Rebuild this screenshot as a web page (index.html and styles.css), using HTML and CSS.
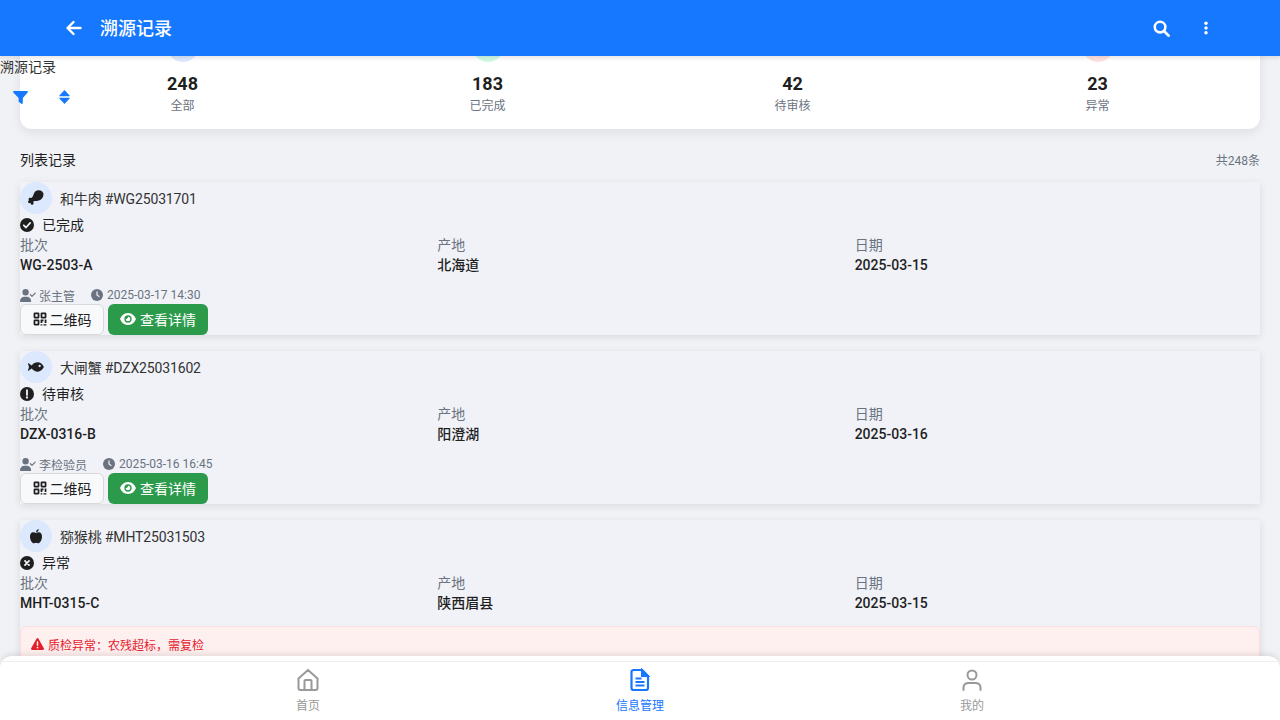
FILE: index.html
```html
<!DOCTYPE html>
<html lang="zh">
  <head>
    <meta charset="utf-8">
    <title>溯源记录</title>
    <link rel="stylesheet" href="styles.css">
  </head>
  <body>
    <svg class="sprite" aria-hidden="true">
      <symbol id="i-user-check" viewBox="0 0 640 512"><path d="M224 256a128 128 0 1 0 0-256 128 128 0 1 0 0 256zm-45.700 48C79.800 304 0 383.800 0 482.300 0 498.700 13.300 512 29.700 512h388.600c16.400 0 29.700-13.300 29.700-29.700C448 383.800 368.200 304 269.700 304h-91.400zM625 177L497 305c-9.400 9.400-24.600 9.400-33.900 0l-64-64c-9.400-9.400-9.400-24.600 0-33.900s24.600-9.400 33.900 0l47 47 111-111c9.400-9.400 24.600-9.400 33.900 0s9.400 24.600 0 33.900z"/></symbol>
      <symbol id="i-clock" viewBox="0 0 24 24"><circle cx="12" cy="12" r="12" fill="currentColor"/><path d="M12 5.500V12l4 3" fill="none" stroke="#f0f2f7" stroke-width="2.400" stroke-linecap="round"/></symbol>
      <symbol id="i-qr" viewBox="0 0 24 24"><path d="M3 1h6a2 2 0 0 1 2 2v6a2 2 0 0 1-2 2H3a2 2 0 0 1-2-2V3a2 2 0 0 1 2-2zm1 3v4h4V4zM15 1h6a2 2 0 0 1 2 2v6a2 2 0 0 1-2 2h-6a2 2 0 0 1-2-2V3a2 2 0 0 1 2-2zm1 3v4h4V4zM3 13h6a2 2 0 0 1 2 2v6a2 2 0 0 1-2 2H3a2 2 0 0 1-2-2v-6a2 2 0 0 1 2-2zm1 3v4h4v-4zM13 13h5v3h-2v3h-3zM20 13h3v6h-3zM13 21h3v2h-3zM18 21h5v2h-5z" fill-rule="evenodd"/></symbol>
      <symbol id="i-eye" viewBox="0 0 24 24"><path d="M12 3C6 3 1.800 7.500 0 12c1.800 4.500 6 9 12 9s10.200-4.500 12-9C22.200 7.500 18 3 12 3zm0 3.500a5.500 5.500 0 1 1 0 11 5.500 5.500 0 0 1 0-11z" fill-rule="evenodd"/><path d="M12 8.500a3.500 3.500 0 1 1-3.500 3.500c1.500 0 3.500-1.500 3.500-3.500z"/></symbol>
    </svg>

    <header class="topbar">
      <svg class="topbar-back" viewBox="0 0 16 16"><path d="M14.500 8H2M7.500 2L1.500 8l6 6" fill="none" stroke="#fff" stroke-width="2.400" stroke-linecap="round" stroke-linejoin="round"/></svg>
      <h1 class="topbar-title">溯源记录</h1>
      <svg class="topbar-search" viewBox="0 0 24 24"><circle cx="10" cy="10" r="7.500" fill="none" stroke="#fff" stroke-width="3.600"/><path d="M15.500 15.500L22 22" stroke="#fff" stroke-width="3.800" stroke-linecap="round"/></svg>
      <svg class="topbar-more" viewBox="0 0 6 18"><circle cx="3" cy="3" r="2.200" fill="#fff"/><circle cx="3" cy="9" r="2.200" fill="#fff"/><circle cx="3" cy="15" r="2.200" fill="#fff"/></svg>
    </header>

    <div class="float-tools">
      <div class="float-title">溯源记录</div>
      <div class="float-icons">
        <svg class="icon-filter" viewBox="0 0 16 14"><path d="M1 0h14c.9 0 1.300 1 .7 1.700L10.500 7.500V13c0 .8-.8 1.200-1.500.7L6 11.500V7.500L.3 1.700C-.3 1 .1 0 1 0z"/></svg>
        <svg class="icon-sort" viewBox="0 0 11 14"><path d="M5.500 0L10.600 5.500a.4.400 0 0 1-.3.700H.7a.4.400 0 0 1-.3-.7zM5.500 14L10.600 8.500a.4.400 0 0 0-.3-.7H.7a.4.400 0 0 0-.3.700z"/></svg>
      </div>
    </div>

    <main class="content">
      <section class="stats">
        <div class="stat">
          <span class="stat-dot dot-blue"></span>
          <strong class="stat-num">248</strong>
          <span class="stat-label">全部</span>
        </div>
        <div class="stat">
          <span class="stat-dot dot-green"></span>
          <strong class="stat-num">183</strong>
          <span class="stat-label">已完成</span>
        </div>
        <div class="stat">
          <span class="stat-dot"></span>
          <strong class="stat-num">42</strong>
          <span class="stat-label">待审核</span>
        </div>
        <div class="stat">
          <span class="stat-dot dot-red"></span>
          <strong class="stat-num">23</strong>
          <span class="stat-label">异常</span>
        </div>
      </section>

      <div class="list-head">
        <span class="list-title">列表记录</span>
        <span class="list-count">共248条</span>
      </div>

      <article class="record">
        <div class="record-head">
          <span class="avatar">
            <svg viewBox="0 0 24 24"><path d="M23.500 6.500C23 2.500 19 0 15 .5c-3.500.5-5.500 3-6.500 6-.6 1.800-1.200 3.500-2.500 4.800-.5.5-1 .8-1.500.7l-1-.4c-1.300-.5-2.700.5-2.700 1.800 0 .8.400 1.500 1 1.900C.9 15.500 0 16.500 0 17.700c0 1.600 1.700 2.700 3.200 2l1-.4c-.1.300-.2.700-.1 1 .1 1.400 1.600 2.300 2.900 1.800 1.300-.5 1.800-2 1.200-3.200l-.5-.8c.7-1.100 2-1.500 3.500-1.500 3.500 0 6.500-.5 9-3 1.900-1.900 3.200-4.500 2.800-7.100z"/></svg>
          </span>
          <span class="record-name">和牛肉 #WG25031701</span>
        </div>
        <div class="record-status">
          <svg viewBox="0 0 24 24"><circle cx="12" cy="12" r="12"/><path d="M6.500 12.500l3.800 3.800 7.200-7.800" fill="none" stroke="#f0f2f7" stroke-width="3" stroke-linecap="round" stroke-linejoin="round"/></svg>
          <span>已完成</span>
        </div>
        <div class="record-grid">
          <div><div class="field-label">批次</div><div class="field-value">WG-2503-A</div></div>
          <div><div class="field-label">产地</div><div class="field-value">北海道</div></div>
          <div><div class="field-label">日期</div><div class="field-value">2025-03-15</div></div>
        </div>
        <div class="record-meta">
          <svg class="meta-user"><use href="#i-user-check"/></svg>
          <span>张主管</span>
          <svg class="meta-clock"><use href="#i-clock"/></svg>
          <span>2025-03-17 14:30</span>
        </div>
        <div class="record-actions">
          <button class="btn btn-light"><svg><use href="#i-qr"/></svg>二维码</button>
          <button class="btn btn-green"><svg><use href="#i-eye"/></svg>查看详情</button>
        </div>
      </article>

      <article class="record">
        <div class="record-head">
          <span class="avatar">
            <svg viewBox="0 0 24 24"><path d="M.9 6.500l4.600 3.300C8 6.800 11 5 14.500 5c4 0 7.500 3 9.300 7-1.800 4-5.300 7-9.300 7-3.500 0-6.500-1.800-9-4.800L.9 17.500c-.5.300-1-.1-.9-.6L1.500 12 0 7.100c-.1-.5.400-.9.900-.6z"/><circle cx="17.500" cy="10.500" r="1.700" fill="#dbe8fd"/></svg>
          </span>
          <span class="record-name">大闸蟹 #DZX25031602</span>
        </div>
        <div class="record-status">
          <svg viewBox="0 0 24 24"><circle cx="12" cy="12" r="12"/><path d="M12 5.500v8" stroke="#f0f2f7" stroke-width="3.200" stroke-linecap="round"/><circle cx="12" cy="18" r="2" fill="#f0f2f7"/></svg>
          <span>待审核</span>
        </div>
        <div class="record-grid">
          <div><div class="field-label">批次</div><div class="field-value">DZX-0316-B</div></div>
          <div><div class="field-label">产地</div><div class="field-value">阳澄湖</div></div>
          <div><div class="field-label">日期</div><div class="field-value">2025-03-16</div></div>
        </div>
        <div class="record-meta">
          <svg class="meta-user"><use href="#i-user-check"/></svg>
          <span>李检验员</span>
          <svg class="meta-clock"><use href="#i-clock"/></svg>
          <span>2025-03-16 16:45</span>
        </div>
        <div class="record-actions">
          <button class="btn btn-light"><svg><use href="#i-qr"/></svg>二维码</button>
          <button class="btn btn-green"><svg><use href="#i-eye"/></svg>查看详情</button>
        </div>
      </article>

      <article class="record">
        <div class="record-head">
          <span class="avatar">
            <svg viewBox="0 0 24 24"><path d="M12 7.500c1.500-1 3.500-1.500 5-1 2.800.8 4 3.500 4 6.500 0 4.500-3 10-6 10-1.200 0-2-.7-3-.7s-1.800.7-3 .7c-3 0-6-5.500-6-10 0-3 1.200-5.700 4-6.500 1.500-.5 3.500 0 5 1z"/><path d="M12 6.500c0-2.500 1.500-4.500 4-5 .2 2.500-1.500 4.500-4 5z"/></svg>
          </span>
          <span class="record-name">猕猴桃 #MHT25031503</span>
        </div>
        <div class="record-status">
          <svg viewBox="0 0 24 24"><circle cx="12" cy="12" r="12"/><path d="M8.500 8.500l7 7M15.500 8.500l-7 7" stroke="#f0f2f7" stroke-width="3" stroke-linecap="round"/></svg>
          <span>异常</span>
        </div>
        <div class="record-grid">
          <div><div class="field-label">批次</div><div class="field-value">MHT-0315-C</div></div>
          <div><div class="field-label">产地</div><div class="field-value">陕西眉县</div></div>
          <div><div class="field-label">日期</div><div class="field-value">2025-03-15</div></div>
        </div>
        <div class="record-alert">
          <svg viewBox="0 0 24 22"><path d="M12 0c.8 0 1.500.4 1.900 1.100l9.800 17.600c.8 1.400-.2 3.300-1.900 3.300H2.200C.5 22-.5 20.100.3 18.700L10.100 1.100C10.500.4 11.200 0 12 0z" fill="#e5202e"/><path d="M12 7v6.500" stroke="#fff" stroke-width="2.600" stroke-linecap="round"/><circle cx="12" cy="17.500" r="1.600" fill="#fff"/></svg>
          <span>质检异常：农残超标，需复检</span>
        </div>
      </article>
    </main>

    <nav class="tabbar">
      <div class="tabbar-inner">
        <a class="tab">
          <svg viewBox="0 0 24 24"><path d="M2.500 10.500L12 2l9.500 8.500V20a2 2 0 0 1-2 2h-15a2 2 0 0 1-2-2zM8.500 22v-9a1 1 0 0 1 1-1h5a1 1 0 0 1 1 1v9" fill="none" stroke="currentColor" stroke-width="2" stroke-linejoin="round"/></svg>
          <span>首页</span>
        </a>
        <a class="tab tab-active">
          <svg viewBox="0 0 24 24"><path d="M5.500 2H14l6 6v12a2 2 0 0 1-2 2H5.500a2 2 0 0 1-2-2V4a2 2 0 0 1 2-2z" fill="none" stroke="currentColor" stroke-width="2.200" stroke-linejoin="round"/><path d="M14 2v6h6zM7.500 10.500h6M7.500 14h9M7.500 17.500h9" fill="currentColor" stroke="currentColor" stroke-width="2"/></svg>
          <span>信息管理</span>
        </a>
        <a class="tab">
          <svg viewBox="0 0 24 24"><circle cx="12" cy="7" r="4.500" fill="none" stroke="currentColor" stroke-width="2"/><path d="M3.500 22v-2.500c0-3 2.500-4.500 5-4.500h7c2.500 0 5 1.500 5 4.500V22" fill="none" stroke="currentColor" stroke-width="2" stroke-linecap="round"/></svg>
          <span>我的</span>
        </a>
      </div>
    </nav>
  </body>
</html>
```

FILE: styles.css
```css
* {
  box-sizing: border-box;
}
html,
body {
  height: 720px;
  overflow: hidden;
}
body {
  margin: 0;
  background-color: #f0f2f5;
  color: #1f1f1f;
  font-family: Roboto, "Noto Sans CJK SC", sans-serif;
  font-size: 14px;
  position: relative;
}
.sprite {
  display: none;
}

/* top bar */
.topbar {
  position: absolute;
  top: 0;
  left: 0;
  right: 0;
  height: 56px;
  background-color: #1677ff;
  box-shadow: 0 2px 4px rgba(0, 0, 0, 0.1);
  display: flex;
  align-items: center;
  padding: 0 66px;
  z-index: 5;
}
.topbar-back {
  width: 16px;
  height: 16px;
  margin-right: 18px;
}
.topbar-title {
  flex: 1;
  margin: 2px 0 0;
  color: #fff;
  font-size: 18px;
  font-weight: 500;
  line-height: 24px;
}
.topbar-search {
  width: 17px;
  height: 17px;
  margin-right: 33px;
}
.topbar-more {
  width: 6px;
  height: 14px;
  margin-right: 5px;
}

/* stray title and filter icons above the stats card */
.float-tools {
  position: absolute;
  top: 58px;
  left: 0;
  z-index: 4;
}
.float-title {
  font-size: 14px;
  line-height: 18px;
  color: #333;
}
.float-icons {
  display: flex;
  align-items: center;
  padding: 14px 0 0 13px;
}
.icon-filter {
  width: 15px;
  height: 13px;
  fill: #1677ff;
}
.icon-sort {
  width: 11px;
  height: 14px;
  margin-left: 31px;
  fill: #1677ff;
}

/* page content */
.content {
  padding: 14px 20px 0;
}
.stats {
  display: flex;
  background-color: #fff;
  border-radius: 12px;
  padding: 16px 10px;
  height: 115px;
  box-shadow: 0 4px 12px rgba(0, 0, 0, 0.08);
}
.stat {
  flex: 1;
  display: flex;
  flex-direction: column;
  align-items: center;
}
.stat-dot {
  flex: none;
  width: 32px;
  height: 32px;
  border-radius: 50%;
}
.dot-blue {
  background-color: #dbe8fd;
}
.dot-green {
  background-color: #d1fae5;
}
.dot-red {
  background-color: #fee2e2;
}
.stat-num {
  margin-top: 9px;
  font-size: 18px;
  font-weight: 700;
  line-height: 26px;
}
.stat-label {
  font-size: 12px;
  line-height: 16px;
  margin-top: 1px;
  color: #6b7280;
}

.list-head {
  display: flex;
  justify-content: space-between;
  align-items: center;
  height: 20px;
  margin: 20px 0 13px;
}
.list-title {
  font-size: 14px;
}
.list-count {
  font-size: 12px;
  color: #6b7280;
}

/* record cards */
.record {
  background-color: #f0f2f7;
  box-shadow: 0 2px 8px rgba(0, 0, 0, 0.1);
  height: 153px;
  margin-bottom: 16px;
}
.record-head {
  display: flex;
  align-items: center;
  gap: 8px;
  height: 32px;
}
.avatar {
  width: 32px;
  height: 32px;
  border-radius: 50%;
  background-color: #dbe8fd;
  display: flex;
  align-items: center;
  justify-content: center;
}
.avatar svg {
  width: 16px;
  height: 16px;
  fill: #1f1f1f;
}
.record-name {
  font-size: 14px;
  letter-spacing: -0.15px;
  color: #333;
}
.record-status {
  display: flex;
  align-items: center;
  gap: 8px;
  height: 21px;
  padding-bottom: 2px;
  font-size: 14px;
}
.record-status svg {
  width: 14px;
  height: 14px;
  margin-top: 2px;
  fill: #1f1f1f;
}
.record-grid {
  display: grid;
  grid-template-columns: repeat(3, 1fr);
  gap: 12px;
}
.field-label {
  font-size: 14px;
  line-height: 20px;
  color: #6b7280;
}
.field-value {
  font-size: 14px;
  font-weight: 500;
  line-height: 20px;
}
.record-meta {
  display: flex;
  align-items: center;
  height: 17px;
  margin-top: 12px;
  padding-bottom: 1px;
  font-size: 12px;
  color: #6b7280;
}
.meta-user {
  width: 16px;
  height: 13px;
  margin-right: 3px;
  fill: #6b7280;
}
.meta-clock {
  width: 12px;
  height: 12px;
  margin: 0 4px 0 16px;
}
.record-actions {
  display: flex;
  gap: 4px;
}
.btn {
  display: flex;
  align-items: center;
  justify-content: center;
  gap: 3px;
  height: 31px;
  border-radius: 6px;
  font-family: inherit;
  font-size: 14px;
  padding: 0 0 2px;
}
.btn svg {
  width: 14px;
  height: 14px;
}
.btn-light {
  width: 84px;
  background-color: #f8f9fb;
  border: 1px solid #d9d9d9;
  color: #1f1f1f;
  fill: #1f1f1f;
}
.btn-green {
  width: 100px;
  gap: 4px;
  background-color: #2c9a4b;
  border: 0;
  color: #fff;
  fill: #fff;
}
.btn-green svg {
  width: 16px;
  height: 16px;
}
.record-alert {
  display: flex;
  align-items: center;
  gap: 4px;
  height: 38px;
  margin-top: 13px;
  padding: 0 10px 2px;
  background-color: #fff0f0;
  border: 1px solid #fddede;
  border-radius: 6px;
  font-size: 12px;
  color: #e5202e;
}
.record-alert svg {
  width: 13px;
  height: 12px;
}

/* bottom nav */
.tabbar {
  position: absolute;
  left: 0;
  right: 0;
  bottom: 0;
  height: 64px;
  padding-top: 5px;
  background-color: #fff;
  border-radius: 12px 12px 0 0;
  box-shadow: 0 -2px 6px rgba(0, 0, 0, 0.1);
  z-index: 5;
}
.tabbar-inner {
  display: grid;
  grid-template-columns: repeat(3, 332px);
  justify-content: center;
  height: 59px;
  border-top: 1px solid #eeeeee;
}
.tab {
  display: flex;
  flex-direction: column;
  align-items: center;
  padding-top: 6px;
  font-size: 12px;
  line-height: 18px;
  color: #999;
}
.tab svg {
  width: 24px;
  height: 24px;
  margin-bottom: 5px;
}
.tab-active {
  color: #1677ff;
}
```
